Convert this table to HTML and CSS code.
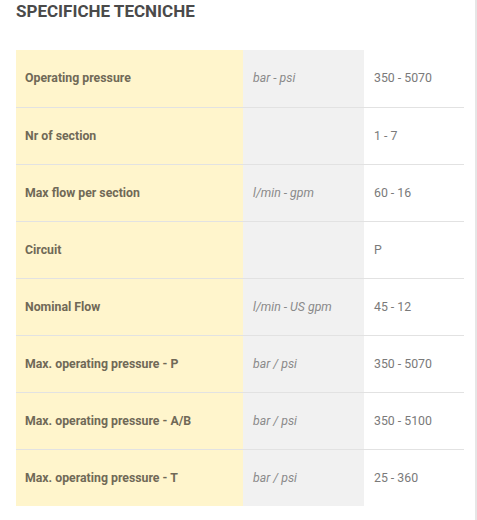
FILE: index.html
```html
<!DOCTYPE html>
<html>
<head>
<meta charset="utf-8">
<link rel="stylesheet" href="styles.css">
</head>
<body>
<div class="page">
  <h2 class="title">SPECIFICHE TECNICHE</h2>
  <table class="specs">
    <tr><td class="label">Operating pressure</td><td class="unit">bar - psi</td><td class="value">350 - 5070</td></tr>
    <tr><td class="label">Nr of section</td><td class="unit"></td><td class="value">1 - 7</td></tr>
    <tr><td class="label">Max flow per section</td><td class="unit">l/min - gpm</td><td class="value">60 - 16</td></tr>
    <tr><td class="label">Circuit</td><td class="unit"></td><td class="value">P</td></tr>
    <tr><td class="label">Nominal Flow</td><td class="unit">l/min - US gpm</td><td class="value">45 - 12</td></tr>
    <tr><td class="label">Max. operating pressure - P</td><td class="unit">bar / psi</td><td class="value">350 - 5070</td></tr>
    <tr><td class="label">Max. operating pressure - A/B</td><td class="unit">bar / psi</td><td class="value">350 - 5100</td></tr>
    <tr><td class="label">Max. operating pressure - T</td><td class="unit">bar / psi</td><td class="value">25 - 360</td></tr>
  </table>
</div>
</body>
</html>
```
FILE: styles.css
```css
html, body {
  margin: 0;
  padding: 0;
  background: #fff;
}
body {
  font-family: Roboto, "Liberation Sans", sans-serif;
}
.page {
  width: 459px;
  height: 520px;
  padding: 0 0 0 16px;
  border-right: 2px solid #e6e6e6;
}
.title {
  margin: 0;
  padding-top: 1px;
  height: 49px;
  font-size: 17px;
  line-height: 20px;
  font-weight: 700;
  color: #4a4a4a;
}
.specs {
  width: 448px;
  border-collapse: collapse;
  table-layout: fixed;
}
.specs tr + tr td {
  border-top: 1px solid #e2e2e2;
}
.specs td {
  height: 57px;
  box-sizing: border-box;
  padding: 0 10px;
  font-size: 12.3px;
  vertical-align: middle;
}
.specs .label {
  width: 227px;
  padding-left: 9px;
  background: #fff5cc;
  font-weight: 700;
  color: #706957;
}
.unit {
  width: 121px;
  background: #f1f1f1;
  font-style: italic;
  color: #8a8a8a;
}
.value {
  color: #7a7a7a;
}
```
